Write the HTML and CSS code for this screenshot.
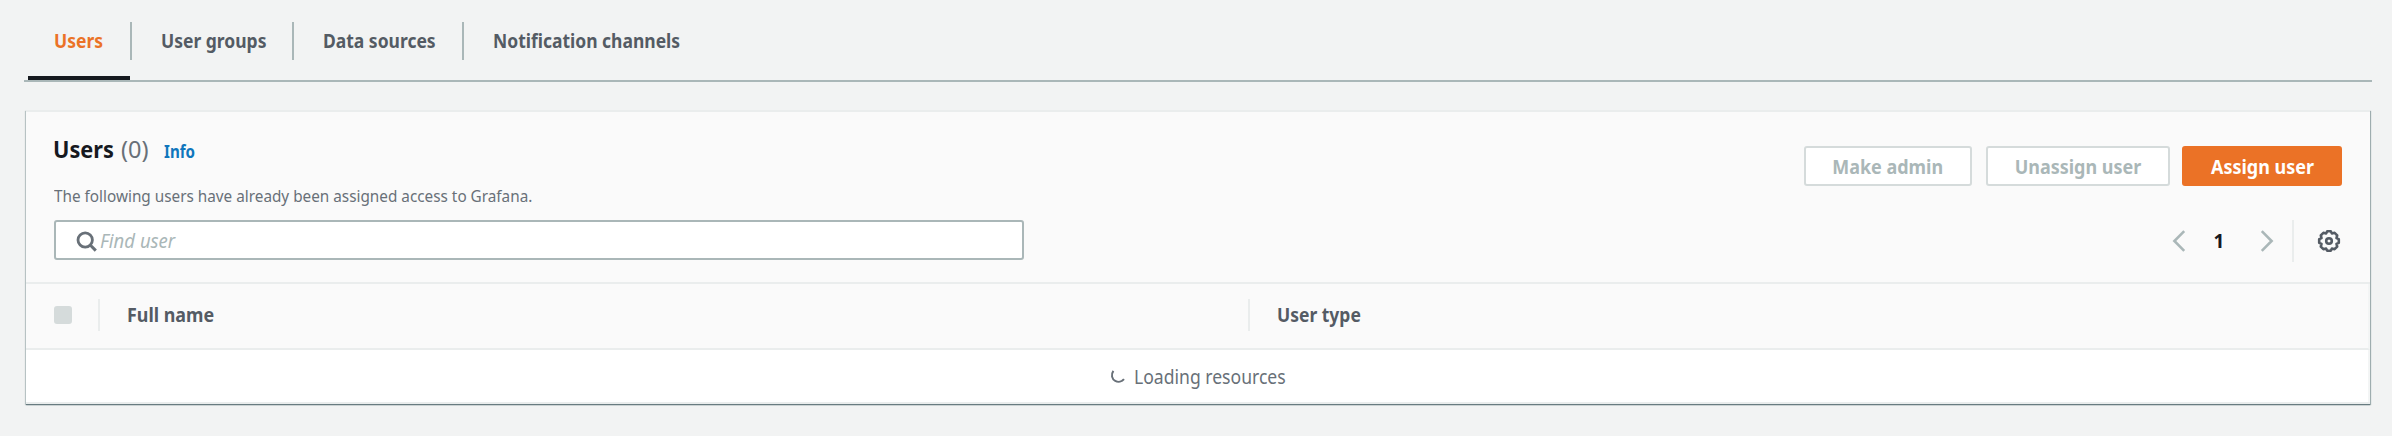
FILE: index.html
```html
<!DOCTYPE html>
<html lang="en">
<head>
<meta charset="utf-8">
<title>Users</title>
<link rel="stylesheet" href="styles.css">
</head>
<body>
<nav class="tabs">
  <a class="tab tab-active"><span class="text">Users</span></a>
  <a class="tab"><span class="text">User groups</span></a>
  <a class="tab"><span class="text">Data sources</span></a>
  <a class="tab"><span class="text">Notification channels</span></a>
</nav>
<main class="panel">
  <header class="panel-header">
    <div class="heading-row">
      <div class="heading">
        <div class="title-line">
          <h1 class="title">Users</h1>
          <span class="count">(0)</span>
          <a class="info">Info</a>
        </div>
        <p class="description">The following users have already been assigned access to Grafana.</p>
      </div>
      <div class="actions">
        <button class="btn btn-make" disabled><span class="label">Make admin</span></button>
        <button class="btn btn-unassign" disabled><span class="label">Unassign user</span></button>
        <button class="btn btn-primary"><span class="label">Assign user</span></button>
      </div>
    </div>
    <div class="tools">
      <div class="search">
        <svg class="search-icon" width="22" height="22" viewBox="0 0 22 22" fill="none" stroke="#687078"><circle cx="9.2" cy="9" r="7.2" stroke-width="2.8"/><path d="M14.2 14l5.6 5.6" stroke-width="3"/></svg>
        <span class="placeholder">Find user</span>
      </div>
      <div class="pager">
        <svg width="14" height="22" viewBox="0 0 14 22" fill="none" stroke="#aab7b8" stroke-width="2.6"><path d="M12.2 1.2L2.4 11l9.8 9.8"/></svg>
        <span class="page">1</span>
        <svg width="14" height="22" viewBox="0 0 14 22" fill="none" stroke="#aab7b8" stroke-width="2.6"><path d="M1.8 1.2l9.8 9.8-9.8 9.8"/></svg>
        <span class="divider"></span>
        <svg class="gear" width="24" height="24" viewBox="-12 -12 24 24" fill="none" stroke="#545b64"><path stroke-width="2.6" stroke-linejoin="round" d="M-1.8 -9.8H1.8L2.9 -7.5L5.6 -8.2L8.2 -5.6L7.5 -2.9L9.8 -1.8V1.8L7.5 2.9L8.2 5.6L5.6 8.2L2.9 7.5L1.8 9.8H-1.8L-2.9 7.5L-5.6 8.2L-8.2 5.6L-7.5 2.9L-9.8 1.8V-1.8L-7.5 -2.9L-8.2 -5.6L-5.6 -8.2L-2.9 -7.5Z"/><circle r="2.8" stroke-width="2.6"/></svg>
      </div>
    </div>
  </header>
  <div class="columns">
    <span class="checkbox"></span>
    <div class="column column-name"><span class="text">Full name</span></div>
    <div class="column column-type"><span class="text">User type</span></div>
  </div>
  <div class="loading">
    <svg width="16" height="16" viewBox="0 0 16 16" fill="none" stroke="#687078" stroke-width="2"><path d="M3.4 1.8C.6 5.6 2 10.2 5.2 11.9C8.2 13.5 12 12.8 14 10.2"/></svg>
    <span class="loading-text">Loading resources</span>
  </div>
</main>
</body>
</html>
```
FILE: styles.css
```css
* { box-sizing: border-box; }
body {
  margin: 0;
  height: 436px;
  padding: 0 20px 0 24px;
  background: #f2f3f3;
  color: #545b64;
  font-family: "Noto Sans", "Open Sans", sans-serif;
  font-size: 19px;
  line-height: 28px;
  white-space: nowrap;
  overflow: hidden;
}
.text, .label, .title, .count, .info, .description, .placeholder, .loading-text {
  display: inline-block;
  transform-origin: left center;
}
.text { transform: scaleX(.92); }
.label { transform: scaleX(.945); transform-origin: center; }
.tabs {
  display: flex;
  height: 82px;
  padding: 22px 0 0 4px;
  border-bottom: 2px solid #aab7b8;
  font-weight: 700;
}
.tab { height: 38px; padding: 5px 0 0 28.5px; border-right: 2px solid #aab7b8; }
.tab:nth-child(1) { width: 104px; padding-left: 26px; }
.tab:nth-child(2) { width: 162px; }
.tab:nth-child(3) { width: 170px; }
.tab:nth-child(4) { border-right: 0; }
.tab-active { color: #eb7226; position: relative; }
.tab-active::after {
  content: "";
  position: absolute;
  left: 0;
  right: 0;
  top: 54px;
  height: 4px;
  background: #16191f;
}
.panel {
  width: 2344px;
  height: 294px;
  margin: 28px 0 0 2px;
  border-top: 2px solid #eaeded;
  border-bottom: 2px solid #eaeded;
  background: #fff;
  box-shadow: 0 1px 1px #687b80, 1px 1px 1px #aab7b8, -1px 1px 1px #c8d0d0;
}
.panel-header {
  height: 172px;
  padding: 22px 28px 0 28px;
  background: #fafafa;
  border-bottom: 2px solid #eaeded;
}
.heading-row { display: flex; justify-content: space-between; height: 86px; }
.heading { width: 600px; }
.title-line { display: flex; align-items: baseline; height: 41px; line-height: 30px; }
.title { margin: 0 0 0 -1px; width: 68px; font-size: 24px; font-weight: 700; color: #16191f; transform: scaleX(.905); }
.count { width: 43px; font-size: 24px; color: #687078; transform: scaleX(.98); }
.info { font-size: 17px; font-weight: 700; color: #0f76bc; transform: scaleX(.89); }
.description { margin: 7px 0 0; font-size: 17px; line-height: 28px; color: #687078; transform: scaleX(.9); }
.actions { display: flex; gap: 14px; padding-top: 12px; }
.btn {
  height: 40px;
  padding: 1px 0 0;
  border: 2px solid #d5dbdb;
  border-radius: 3px;
  background: #fff;
  color: #aab7b8;
  font: 700 19px/28px "Noto Sans", sans-serif;
}
.btn-make { width: 168px; }
.btn-unassign { width: 184px; }
.btn-primary { width: 160px; margin-left: -2px; background: #eb7226; border-color: #eb7226; color: #fff; }
.tools { display: flex; justify-content: space-between; }
.search {
  display: flex;
  width: 970px;
  height: 40px;
  padding: 5px 0 0 20px;
  border: 2px solid #aab7b8;
  border-radius: 3px;
  background: #fff;
}
.search-icon { margin: 4px 2px 0 0; flex: none; }
.placeholder { color: #aab7b8; font-style: italic; transform: scaleX(.975); }
.pager { display: flex; align-items: center; height: 42px; }
.page { width: 74px; padding-right: 8px; text-align: center; color: #16191f; font-weight: 700; }
.divider { width: 2px; height: 42px; margin: 0 23px 0 18px; background: #eaeded; }
.gear { margin-right: 1px; }
.columns {
  display: flex;
  align-items: center;
  height: 66px;
  padding: 0 0 2px 28px;
  background: #fafafa;
  border-right: 2px solid #f3f5f5;
  border-bottom: 2px solid #eaeded;
  font-weight: 700;
}
.checkbox { width: 18px; height: 18px; margin-right: 26px; border-radius: 3px; background: #d5dbdb; }
.column { height: 32px; padding: 2px 0 0 27px; border-left: 2px solid #eaeded; }
.column-name { width: 1150px; }
.column-name .text { transform: scaleX(.94); }
.loading { display: flex; justify-content: center; padding-top: 13px; height: 52px; color: #687078; border-right: 2px solid #f3f5f5; }
.loading svg { margin: 6px 8px 0 0; }
.loading-text { margin-right: -14px; transform: scaleX(.925); }
```
